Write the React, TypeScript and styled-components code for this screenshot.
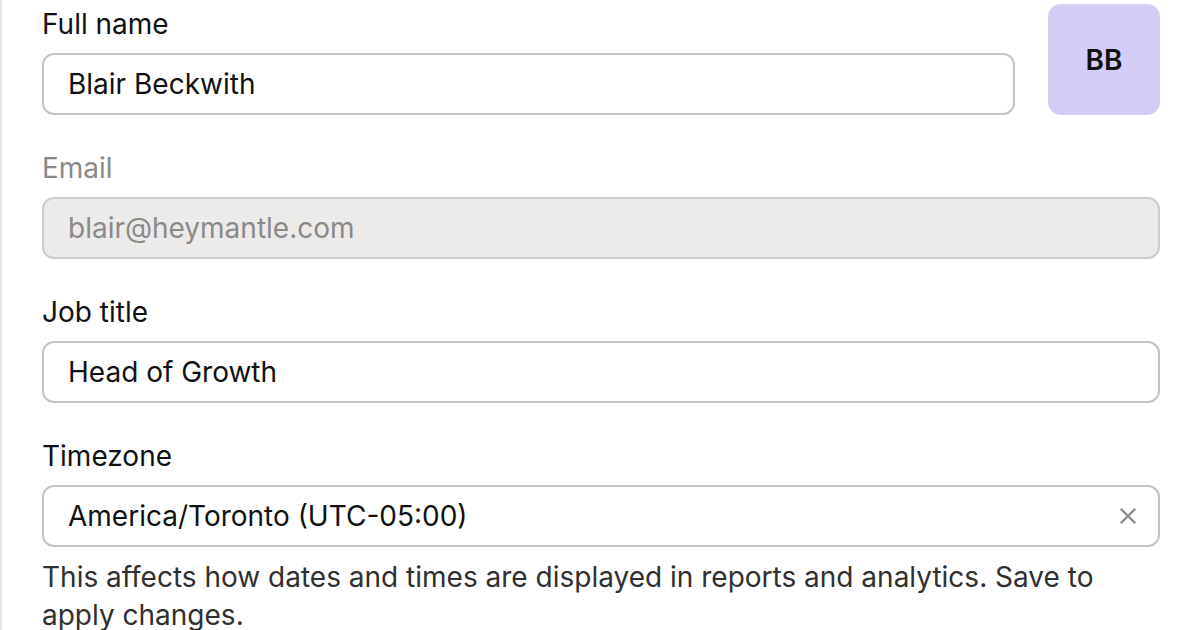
import React from "react";
import styled, { createGlobalStyle } from "styled-components";

const Global = createGlobalStyle`
  html, body { margin: 0; padding: 0; background: #ffffff; }
  body { font-family: Inter, "Noto Sans", sans-serif; -webkit-font-smoothing: antialiased; }
  * { box-sizing: border-box; }
`;

const Page = styled.div`
  width: 1200px;
  height: 630px;
  overflow: hidden;
  border-left: 2px solid #e3e3e3;
  padding: 4px 40px 0 40px;
  display: flex;
  flex-direction: column;
  gap: 33px;
`;

const TopRow = styled.div`
  display: flex;
  align-items: flex-start;
  gap: 33px;
`;

const Field = styled.div<{ $grow?: boolean }>`
  flex: ${(p) => (p.$grow ? "1 1 auto" : "none")};
  display: flex;
  flex-direction: column;
  gap: 9px;
`;

const Label = styled.label<{ $disabled?: boolean }>`
  font-size: 28px;
  line-height: 40px;
  color: ${(p) => (p.$disabled ? "#8a8a8a" : "#111111")};
`;

const InputBox = styled.div<{ $disabled?: boolean }>`
  height: 62px;
  border: 2px solid ${(p) => (p.$disabled ? "#cccccc" : "#c4c4c4")};
  border-radius: 12px;
  background: ${(p) => (p.$disabled ? "#ecebe9" : "#ffffff")};
  display: flex;
  align-items: center;
  padding: 0 24px;
  font-size: 28px;
  color: ${(p) => (p.$disabled ? "#8a8a8a" : "#111111")};
`;

const Value = styled.span`
  flex: 1;
  white-space: nowrap;
`;

const ClearIcon = styled.svg`
  width: 16px;
  height: 16px;
  margin-right: -2px;
  flex: none;
`;

const Avatar = styled.div`
  width: 112px;
  height: 111px;
  border-radius: 13px;
  background: #d4cdf7;
  display: flex;
  align-items: center;
  justify-content: center;
  font-size: 28px;
  font-weight: 600;
  color: #111111;
  flex: none;
`;

const Help = styled.p`
  margin: 2px 0 0 0;
  font-size: 28px;
  line-height: 38px;
  color: #303030;
`;

export default function App() {
  return (
    <>
      <Global />
      <Page>
        <TopRow>
          <Field $grow>
            <Label>Full name</Label>
            <InputBox>
              <Value>Blair Beckwith</Value>
            </InputBox>
          </Field>
          <Avatar>BB</Avatar>
        </TopRow>
        <Field>
          <Label $disabled>Email</Label>
          <InputBox $disabled>
            <Value>blair@heymantle.com</Value>
          </InputBox>
        </Field>
        <Field>
          <Label>Job title</Label>
          <InputBox>
            <Value>Head of Growth</Value>
          </InputBox>
        </Field>
        <Field>
          <Label>Timezone</Label>
          <InputBox>
            <Value>America/Toronto (UTC-05:00)</Value>
            <ClearIcon viewBox="0 0 16 16" fill="none">
              <path d="M1.5 1.5L14.5 14.5M14.5 1.5L1.5 14.5" stroke="#8a8a8a" strokeWidth="2.4" strokeLinecap="round" />
            </ClearIcon>
          </InputBox>
          <Help>
            This affects how dates and times are displayed in reports and analytics. Save to apply changes.
          </Help>
        </Field>
      </Page>
    </>
  );
}
